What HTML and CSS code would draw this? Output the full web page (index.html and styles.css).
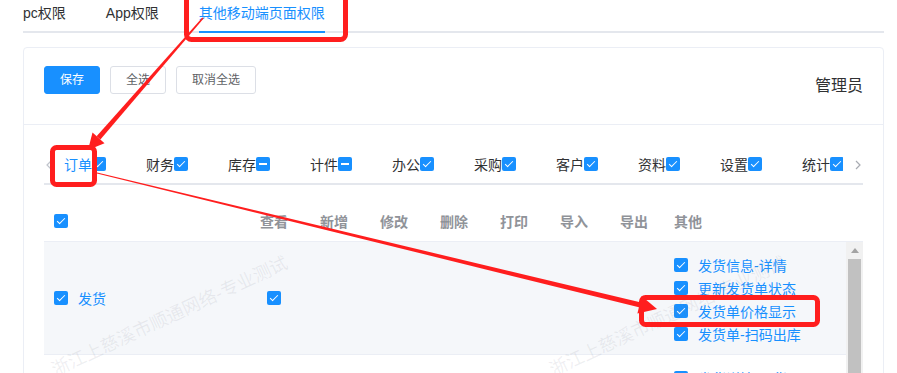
FILE: index.html
```html
<!DOCTYPE html>
<html lang="zh-CN">
<head>
  <meta charset="UTF-8">
  <title>权限设置</title>
  <link rel="stylesheet" href="styles.css">
</head>
<body>

  <div class="page">
    <div class="top-tabs">
      <div class="top-tab">pc权限</div>
      <div class="top-tab">App权限</div>
      <div class="top-tab active">其他移动端页面权限</div>
    </div>

    <div class="card">
      <div class="card-header">
        <div class="btns">
          <button class="btn btn-primary">保存</button>
          <button class="btn">全选</button>
          <button class="btn">取消全选</button>
        </div>
        <span class="role">管理员</span>
      </div>

      <div class="card-body">
        <div class="mod-tabs">
          <span class="nav-arrow prev">
            <svg width="6" height="10" viewBox="0 0 6 10"><path d="M5 1 L1 5 L5 9" fill="none" stroke="#c0c4cc" stroke-width="1.2"/></svg>
          </span>
          <div class="mod-nav">
            <div class="mod-tab active">订单<i class="cb"></i></div>
            <div class="mod-tab">财务<i class="cb"></i></div>
            <div class="mod-tab">库存<i class="cb half"></i></div>
            <div class="mod-tab">计件<i class="cb half"></i></div>
            <div class="mod-tab">办公<i class="cb"></i></div>
            <div class="mod-tab">采购<i class="cb"></i></div>
            <div class="mod-tab">客户<i class="cb"></i></div>
            <div class="mod-tab">资料<i class="cb"></i></div>
            <div class="mod-tab">设置<i class="cb"></i></div>
            <div class="mod-tab">统计<i class="cb"></i></div>
          </div>
          <span class="nav-arrow next">
            <svg width="6" height="10" viewBox="0 0 6 10"><path d="M1 1 L5 5 L1 9" fill="none" stroke="#a8abb2" stroke-width="1.2"/></svg>
          </span>
        </div>

        <div class="perm-table">
          <div class="thead">
            <div class="col-name"><i class="cb"></i></div>
            <div class="col-op">查看</div>
            <div class="col-op">新增</div>
            <div class="col-op">修改</div>
            <div class="col-op">删除</div>
            <div class="col-op">打印</div>
            <div class="col-op">导入</div>
            <div class="col-op">导出</div>
            <div class="col-other">其他</div>
          </div>

          <div class="tbody-wrap">
            <div class="tbody">
              <div class="tr hover">
                <div class="col-name"><i class="cb"></i><span class="link">发货</span></div>
                <div class="col-op"><i class="cb"></i></div>
                <div class="col-op"></div>
                <div class="col-op"></div>
                <div class="col-op"></div>
                <div class="col-op"></div>
                <div class="col-op"></div>
                <div class="col-op"></div>
                <div class="col-other">
                  <div class="other-item"><i class="cb"></i><span class="link">发货信息-详情</span></div>
                  <div class="other-item"><i class="cb"></i><span class="link">更新发货单状态</span></div>
                  <div class="other-item"><i class="cb"></i><span class="link">发货单价格显示</span></div>
                  <div class="other-item"><i class="cb"></i><span class="link">发货单-扫码出库</span></div>
                </div>
              </div>
              <div class="tr">
                <div class="col-name"><i class="cb"></i><span class="link">退货</span></div>
                <div class="col-op"><i class="cb"></i></div>
                <div class="col-op"></div>
                <div class="col-op"></div>
                <div class="col-op"></div>
                <div class="col-op"></div>
                <div class="col-op"></div>
                <div class="col-op"></div>
                <div class="col-other">
                  <div class="other-item"><i class="cb"></i><span class="link">发货详情-退货</span></div>
                  <div class="other-item"><i class="cb"></i><span class="link">退货单-详情</span></div>
                  <div class="other-item"><i class="cb"></i><span class="link">退货单价格显示</span></div>
                </div>
              </div>
            </div>
            <div class="scrollbar">
              <div class="sb-up"></div>
              <div class="sb-thumb"></div>
            </div>
          </div>
        </div>
      </div>
    </div>

    <!-- 水印 -->
    <span class="wm wm-1">浙江上慈溪市顺通网络-专业测试</span>
    <span class="wm wm-2">浙江上慈溪市顺通网络-专业测试</span>

    <!-- 红色标注 -->
    <svg class="marks" width="897" height="373" viewBox="0 0 897 373">
      <g fill="none" stroke="#ff1e1e" stroke-width="5">
        <rect x="186.5" y="-10" width="159" height="49.5" rx="5"/>
        <rect x="52.5" y="147.5" width="42" height="37" rx="4"/>
        <rect x="641.5" y="297.5" width="176" height="27" rx="4"/>
      </g>
      <g fill="#ff1e1e">
        <polygon points="203.6,18.5 100.4,139.5 96.6,136.3 202.4,17.5"/>
        <polygon points="88,150 104.5,143.2 92.5,132.6"/>
        <polygon points="96.9,173.4 638.9,307.2 640.1,302.3 97.1,172.6"/>
        <polygon points="657,309 637.4,313.5 641.6,296"/>
      </g>
    </svg>
  </div>

</body>
</html>
```

FILE: styles.css
```css
* { box-sizing: border-box; margin: 0; padding: 0; }

html, body {
  height: 100%;
  overflow: hidden;
}

body {
  font-family: "Liberation Sans", "Noto Sans CJK SC", sans-serif;
  font-size: 14px;
  color: #303133;
  background-color: #fff;
}

.page {
  position: relative;
  padding: 0 13px 0 23px;
  height: 100%;
}

/* 顶部权限类型 */
.top-tabs {
  display: flex;
  height: 33px;
  border-bottom: 2px solid #e4e7ed;
}

.top-tab {
  height: 33px;
  margin-bottom: -2px;
  padding: 0 20px;
  line-height: 26px;
  border-bottom: 2px solid transparent;
  color: #303133;
}

.top-tab:first-child {
  padding-left: 0;
}

.top-tab.active {
  padding: 0;
  margin: 0 20px -2px;
  color: #1890ff;
  border-bottom-color: #1890ff;
}

/* 卡片 */
.card {
  margin-top: 14px;
  border: 1px solid #ebeef5;
  border-radius: 4px;
  height: 400px;
}

.card-header {
  display: flex;
  justify-content: space-between;
  align-items: flex-start;
  height: 77px;
  padding: 18px 20px;
  border-bottom: 1px solid #ebeef5;
}

.btns {
  display: flex;
  gap: 10px;
}

.btn {
  height: 28px;
  padding: 0 15px;
  font-family: inherit;
  font-size: 12px;
  line-height: 26px;
  color: #606266;
  background: #fff;
  border: 1px solid #dcdfe6;
  border-radius: 3px;
}

.btn-primary {
  color: #fff;
  background: #1890ff;
  border-color: #1890ff;
}

.role {
  margin-top: 9px;
  font-size: 16px;
  line-height: 22px;
  color: #303133;
}

.card-body {
  padding: 20px;
}

/* 模块页签 */
.mod-tabs {
  display: flex;
  height: 40px;
  border-bottom: 2px solid #e4e7ed;
}

.nav-arrow {
  width: 20px;
  display: flex;
  align-items: center;
  padding-top: 2px;
}

.nav-arrow.prev { padding-left: 2px; }
.nav-arrow.next { padding-left: 12px; }

.mod-nav {
  flex: 1;
  display: flex;
  overflow: hidden;
}

.mod-tab {
  display: flex;
  align-items: center;
  flex-shrink: 0;
  height: 40px;
  margin: 0 20px -2px;
  border-bottom: 2px solid transparent;
  color: #303133;
}

.mod-tab:first-child {
  margin-left: 0;
}

.mod-tab.active {
  color: #1890ff;
  border-bottom-color: #1890ff;
}

/* 复选框 */
.cb {
  position: relative;
  display: inline-block;
  flex-shrink: 0;
  width: 14px;
  height: 14px;
  border-radius: 2px;
  background: #1890ff;
}

.cb::after {
  content: "";
  position: absolute;
  left: 5px;
  top: 2px;
  width: 3px;
  height: 7px;
  border: 1px solid #fff;
  border-left: 0;
  border-top: 0;
  transform: rotate(45deg);
}

.cb.half::after {
  left: 3px;
  top: 6px;
  width: 8px;
  height: 2px;
  border: 0;
  background: #fff;
  transform: none;
}

/* 权限表格 */
.perm-table {
  margin-top: 15px;
}

.thead {
  display: flex;
  height: 42px;
  align-items: center;
  border-bottom: 1px solid #ebeef5;
  font-weight: bold;
  color: #909399;
}

.col-name {
  width: 200px;
  flex-shrink: 0;
  display: flex;
  align-items: center;
  gap: 10px;
  padding-left: 10px;
}

.col-op {
  width: 60px;
  flex-shrink: 0;
  display: flex;
  justify-content: center;
  align-items: center;
}

.col-other {
  flex: 1;
  padding-left: 10px;
}

.tbody-wrap {
  display: flex;
  height: 200px;
  overflow: hidden;
}

.tbody {
  flex: 1;
}

.tr {
  display: flex;
  align-items: stretch;
  border-bottom: 1px solid #ebeef5;
}

.tr.hover {
  background: #f5f7fa;
}

.tr .col-other {
  padding-top: 11px;
  padding-bottom: 9px;
}

.other-item {
  display: flex;
  align-items: center;
  gap: 10px;
  height: 23px;
}

.link {
  color: #1890ff;
}

/* 滚动条 */
.scrollbar {
  width: 17px;
  background: #f1f1f1;
}

.sb-up {
  height: 17px;
  display: flex;
  justify-content: center;
  align-items: center;
}

.sb-up::before {
  content: "";
  border-left: 4px solid transparent;
  border-right: 4px solid transparent;
  border-bottom: 5px solid #a3a3a3;
}

.sb-thumb {
  height: 160px;
  margin: 0 2px;
  background: #c1c1c1;
}

/* 水印 */
.wm {
  position: absolute;
  font-size: 18px;
  line-height: 20px;
  white-space: nowrap;
  color: rgba(120, 125, 140, 0.12);
  transform-origin: 0 20px;
  transform: rotate(-25deg);
  pointer-events: none;
}

.wm-1 { left: 57px; top: 360px; }
.wm-2 { left: 555px; top: 360px; }

.marks {
  position: absolute;
  left: 0;
  top: 0;
  pointer-events: none;
}
```
